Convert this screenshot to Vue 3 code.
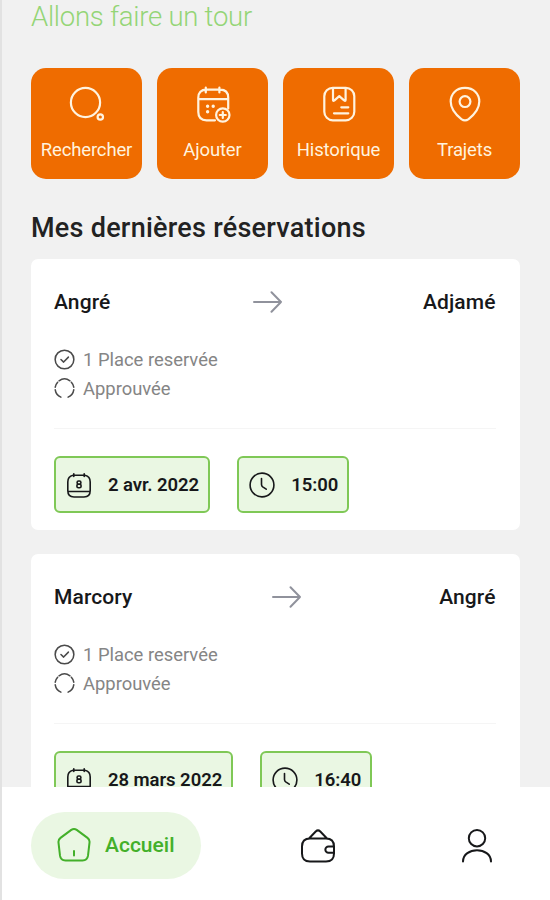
<script setup>
const actions = [
  { id: 'search', label: 'Rechercher' },
  { id: 'add', label: 'Ajouter' },
  { id: 'history', label: 'Historique' },
  { id: 'trips', label: 'Trajets' },
]
const bookings = [
  { from: 'Angré', to: 'Adjamé', seats: '1 Place reservée', status: 'Approuvée', date: '2 avr. 2022', time: '15:00' },
  { from: 'Marcory', to: 'Angré', seats: '1 Place reservée', status: 'Approuvée', date: '28 mars 2022', time: '16:40' },
]
</script>

<template>
  <div class="screen">
    <main class="content">
      <p class="tagline">Allons faire un tour</p>

      <div class="actions">
        <button v-for="a in actions" :key="a.id" class="action">
          <svg v-if="a.id === 'search'" class="action-icon" viewBox="0 0 40 40">
            <circle cx="18.500" cy="18.500" r="14.600" />
            <circle cx="33.300" cy="33" r="2.700" />
          </svg>
          <svg v-else-if="a.id === 'add'" class="action-icon" viewBox="0 0 40 40">
            <path d="M22 36.300h-8.500q-8.200 0-8.200-8.200V13.700q0-8 8.200-8h13.500q8.200 0 8.200 8V24.500M5.300 15.200h29.900M12.800 3.500v4.900M26.400 3.500v4.900" />
            <path class="dots" d="M14.600 22.300h.01M20.200 22.300h.01M14.600 27.800h.01" />
            <circle cx="29.800" cy="31" r="6.700" />
            <path d="M29.800 28v6M26.800 31h6" />
          </svg>
          <svg v-else-if="a.id === 'history'" class="action-icon" viewBox="0 0 40 40">
            <rect x="5.300" y="3.800" width="30" height="32.500" rx="8.500" />
            <path d="M14 4v11.700q0 2 1.500.6l4.800-4.200 4.800 4.200q1.500 1.400 1.500-.6V4M22.300 23.300h7M15 29.300h14.300" />
          </svg>
          <svg v-else class="action-icon" viewBox="0 0 40 40">
            <path d="M20 3.900c-9 0-14.300 6.300-14.300 13.600 0 7.500 5.400 13.400 10.700 17.600q3.600 2.700 7.200 0c5.300-4.200 10.700-10.100 10.700-17.600C34.300 10.200 29 3.900 20 3.900z" />
            <circle cx="20" cy="17.600" r="5.400" />
          </svg>
          <span class="action-label">{{ a.label }}</span>
        </button>
      </div>

      <h2 class="heading">Mes dernières réservations</h2>

      <article v-for="b in bookings" :key="b.date" class="card">
        <header class="route">
          <span>{{ b.from }}</span>
          <svg class="arrow" viewBox="0 0 30 24"><path d="M1 12h27M18.500 2.300L28 12l-9.500 9.700" /></svg>
          <span>{{ b.to }}</span>
        </header>
        <ul class="details">
          <li>
            <svg class="small-icon" viewBox="0 0 22 22"><circle cx="11" cy="11" r="9.800" /><path d="M7.300 11l2.800 2.700 5-5.200" /></svg>
            <span>{{ b.seats }}</span>
          </li>
          <li>
            <svg class="small-icon" viewBox="0 0 22 22">
              <path d="M5.300 2.900A9.800 9.800 0 0 1 16.700 2.900M18.200 4.400A9.800 9.800 0 0 1 20.700 9.600M20.700 12.400A9.800 9.800 0 0 1 14.800 20M7.200 20A9.800 9.800 0 0 1 1.300 12.400M1.300 9.600A9.800 9.800 0 0 1 3.800 4.400" />
            </svg>
            <span>{{ b.status }}</span>
          </li>
        </ul>
        <footer class="schedule">
          <div class="chip">
            <svg class="chip-icon" viewBox="0 0 26 26">
              <path d="M7 3.200C3.200 3.900 1.800 6.700 1.800 10v8.500Q1.800 25 8 25h10q6.200 0 6.200-6.500V10c0-3.300-1.400-6.100-5.200-6.800M8.500 3.200h9M7.800 1.800v2.600M18.200 1.800v2.600M2 19.500h22" />
              <rect x="11.100" y="9" width="3.800" height="3.200" rx="1.400" /><rect x="10.900" y="12.200" width="4.200" height="3.600" rx="1.500" />
            </svg>
            <span>{{ b.date }}</span>
          </div>
          <div class="chip">
            <svg class="chip-icon" viewBox="0 0 26 26"><circle cx="13" cy="13" r="11.900" /><path d="M12.500 6.500v6q0 1.500 1.200 2.400l3.500 2.300" /></svg>
            <span>{{ b.time }}</span>
          </div>
        </footer>
      </article>
    </main>

    <nav class="nav">
      <a class="tab">
        <svg class="home" viewBox="0 0 36 36">
          <path d="M15.300 2.900q2.700-1.900 5.400 0l10.800 8q2.400 1.800 2 4.700l-1.500 13.100q-.7 4.800-5.500 4.800H9.500q-4.800 0-5.500-4.800L2.500 15.600q-.4-2.900 2-4.700zM18 24v4.500" />
        </svg>
        <span>Accueil</span>
      </a>
      <svg class="wallet" viewBox="0 0 36 36">
        <path d="M10 10.500h16q8 0 8 8v7q0 8-8 8H10q-8 0-8-8v-7q0-8 8-8zM9 10.500l6.700-7q2.300-2.200 4.600 0l6.700 7M34 18.500h-5.500a3 3 0 0 0 0 6.300H34" />
      </svg>
      <svg class="person" viewBox="0 0 36 36">
        <circle cx="18" cy="10.200" r="8.200" /><path d="M4 33.500c0-15 28-15 28 0" />
      </svg>
    </nav>
  </div>
</template>

<style>
body { margin: 0; overflow: hidden; }
</style>

<style scoped>
.screen {
  box-sizing: border-box;
  width: 550px;
  height: 900px;
  display: flex;
  flex-direction: column;
  overflow: hidden;
  border-left: 2px solid #e2e2e2;
  background: #f1f1f1;
  font-family: Roboto, sans-serif;
  color: #17181a;
}
svg { fill: none; stroke: currentColor; stroke-linecap: round; stroke-linejoin: round; flex: none; }
.content {
  box-sizing: border-box;
  height: 787px;
  flex: none;
  padding: 0 30px 0 29px;
  overflow: hidden;
}
.tagline {
  margin: 0;
  height: 68px;
  line-height: 34px;
  font-size: 27.500px;
  font-weight: 300;
  letter-spacing: -0.25px;
  color: #94d576;
}
.actions { display: grid; grid-template-columns: repeat(4, 111px); justify-content: space-between; }
.action {
  box-sizing: border-box;
  height: 111px;
  padding: 16px 0 0;
  border: 0;
  border-radius: 15px;
  background: #ef6c00;
  color: #fff3df;
  display: flex;
  flex-direction: column;
  align-items: center;
  gap: 14px;
  font-family: inherit;
}
.action-icon { width: 40px; height: 40px; stroke-width: 2.2; }
.dots { stroke-width: 3.4; }
.action-label { font-size: 18.500px; font-weight: 450; letter-spacing: -0.15px; line-height: 24px; white-space: nowrap; }
.heading { margin: 0; height: 80px; line-height: 98px; font-size: 27px; font-weight: 500; letter-spacing: 0.25px; color: #222; }
.card {
  box-sizing: border-box;
  height: 271px;
  margin-bottom: 24px;
  padding: 25px 24.500px 16px 23px;
  border-radius: 7px;
  background: #fff;
}
.route {
  display: flex;
  justify-content: space-between;
  align-items: center;
  height: 36px;
  font-size: 21px;
  font-weight: 500;
  letter-spacing: 0.1px;
}
.arrow { width: 30px; height: 24px; margin-left: 2px; stroke-width: 2; color: #90929c; }
.details { list-style: none; margin: 25px 0 0; padding: 0; height: 83px; border-bottom: 1px solid #f5f5f5; }
.details li {
  display: flex;
  align-items: center;
  gap: 8px;
  height: 29px;
  font-size: 18.400px;
  font-weight: 450;
  color: #858585;
}
.small-icon { width: 21px; height: 21px; stroke-width: 1.600; color: #4a4a4a; }
.schedule { display: flex; gap: 27px; margin-top: 27px; }
.chip {
  box-sizing: border-box;
  height: 57px;
  padding: 0 9px 0 10px;
  display: flex;
  align-items: center;
  gap: 16px;
  border: 2px solid #7fc856;
  border-radius: 6px;
  background: #eaf7e3;
  font-size: 18.500px;
  font-weight: 600;
  letter-spacing: -0.05px;
  white-space: nowrap;
}
.chip-icon { width: 26px; height: 26px; stroke-width: 1.600; }
.nav {
  box-sizing: border-box;
  height: 113px;
  padding: 0 55px 0 29px;
  display: flex;
  align-items: center;
  background: #fff;
}
.tab {
  box-sizing: border-box;
  width: 170px;
  height: 67px;
  margin-top: 3px;
  padding-left: 25px;
  display: flex;
  align-items: center;
  gap: 13px;
  border-radius: 34px;
  background: #eaf7e3;
  color: #43b02a;
  font-size: 21px;
  font-weight: 500;
}
.home, .wallet, .person { width: 36px; height: 36px; stroke-width: 2; }
.wallet, .person { margin-top: 4px; }
.wallet { margin-left: 99px; }
.person { margin-left: auto; }
</style>
